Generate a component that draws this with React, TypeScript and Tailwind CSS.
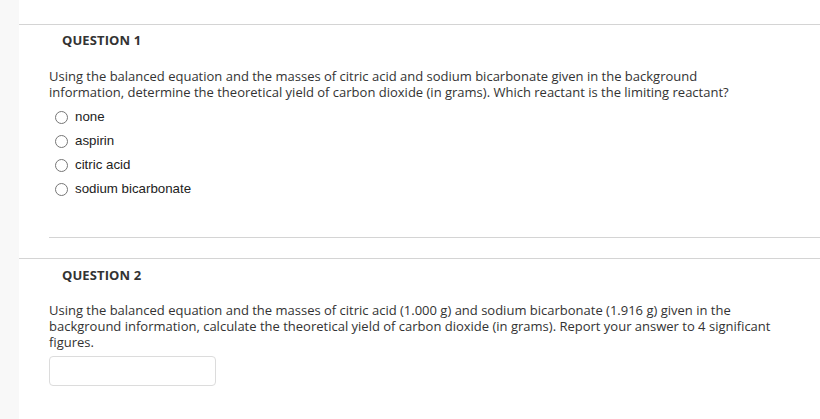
const options = ['none', 'aspirin', 'citric acid', 'sodium bicarbonate'];

const openSans = { fontFamily: '"Open Sans", sans-serif' };

const Radio = ({ label }: { label: string }) => (
  <label className="flex h-6 items-center">
    <span className="ml-[6px] h-[13px] w-[13px] rounded-full border border-[#767676] bg-white" />
    <span className="ml-[7px] font-['Liberation_Sans',Arial,sans-serif] text-[13.3px] text-[#222]">{label}</span>
  </label>
);

const App = () => {
  return (
    <div className="flex h-[419px] w-[820px] overflow-hidden bg-[#f8f8f8]">
      <div className="ml-[19px] flex grow flex-col bg-white" style={openSans}>
        <div className="h-6" />
        <section className="border-t border-[#d4d4d4]">
          <h3 className="ml-[43px] mt-[6px] text-[13px] font-bold leading-[18px] tracking-[0.1px] text-[#333]">QUESTION 1</h3>
          <div className="ml-[30px]">
            <p className="mt-[19px] text-[13px] leading-4 text-[#333]">
              Using the balanced equation and the masses of citric acid and sodium bicarbonate given in the background
              <br />
              information, determine the theoretical yield of carbon dioxide (in grams). Which reactant is the limiting reactant?
            </p>
            <div className="mt-[5px] flex flex-col">
              {options.map((o) => (
                <Radio key={o} label={o} />
              ))}
            </div>
            <div className="mt-[36px] border-t border-[#d4d4d4]" />
          </div>
        </section>
        <section className="mt-[20px] border-t border-[#d4d4d4]">
          <h3 className="ml-[43px] mt-[7px] text-[13px] font-bold leading-[18px] tracking-[0.1px] text-[#333]">QUESTION 2</h3>
          <div className="ml-[30px]">
            <p className="mt-[18px] text-[13px] leading-4 text-[#333]">
              Using the balanced equation and the masses of citric acid (1.000 g) and sodium bicarbonate (1.916 g) given in the
              <br />
              background information, calculate the theoretical yield of carbon dioxide (in grams). Report your answer to 4 significant
              <br />
              figures.
            </p>
            <input
              type="text"
              aria-label="answer"
              className="mt-[6px] h-[30px] w-[167px] rounded-[4px] border border-[#dcdcdc] bg-white px-2 text-[13px] outline-none"
            />
          </div>
        </section>
      </div>
    </div>
  );
};

export default App;
